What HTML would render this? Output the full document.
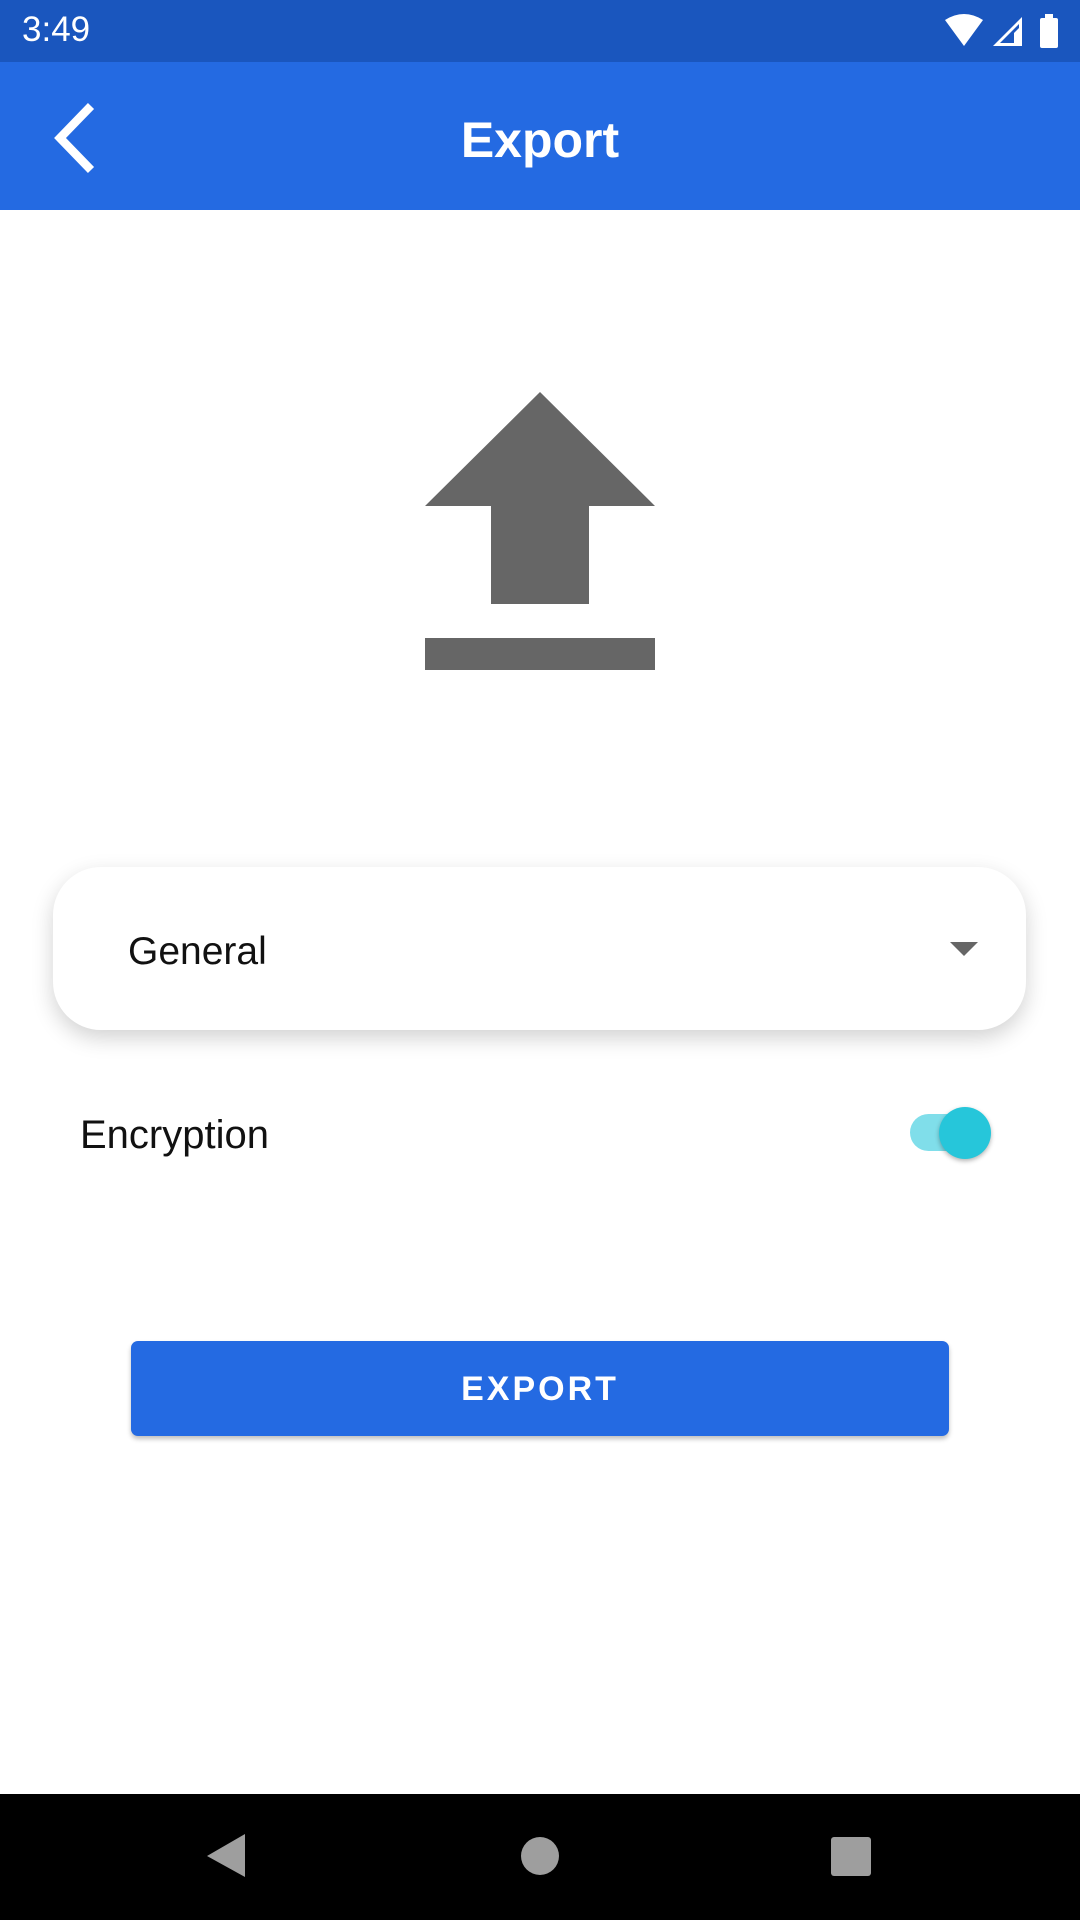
<!DOCTYPE html>
<html><head><meta charset="utf-8"><style>
body{margin:0;width:1080px;height:1920px;position:relative;background:#fff;font-family:"Liberation Sans",Roboto,sans-serif;overflow:hidden}
.abs{position:absolute}
</style></head><body>
<div class="abs" style="left:0;top:0;width:1080px;height:62px;background:#1a56be"></div>
<div class="abs" style="left:22px;top:10px;color:#fff;font-size:35px">3:49</div>
<svg class="abs" style="left:940px;top:12px" width="130" height="40" viewBox="0 0 130 40">
<path d="M5 8 Q24 -4 43 8 L24 34 Z" fill="#fff"/>
<path d="M53 34 L82 5 L82 34 Z" fill="#fff"/><path d="M60 31 L79 12 L79 31 Z" fill="#1a56be"/><path d="M74 31 L79 31 L79 16 L74 21Z" fill="#fff"/>
<rect x="100" y="6" width="18" height="30" rx="2" fill="#fff"/><rect x="105" y="2" width="8" height="5" fill="#fff"/>
</svg>
<div class="abs" style="left:0;top:62px;width:1080px;height:148px;background:#246ae2"></div>
<svg class="abs" style="left:48px;top:100px" width="60" height="76" viewBox="0 0 60 76"><path d="M43 6 L12 38 L43 70" stroke="#fff" stroke-width="8.5" fill="none"/></svg>
<div class="abs" style="left:0;width:1080px;top:111px;text-align:center;color:#fff;font-size:50px;font-weight:bold">Export</div>
<svg class="abs" style="left:0;top:0" width="1080" height="700">
<path d="M540 392 L655 506 L589 506 L589 604 L491 604 L491 506 L425 506 Z" fill="#666"/>
<rect x="425" y="638" width="230" height="32" fill="#666"/>
</svg>
<div class="abs" style="left:53px;top:867px;width:973px;height:163px;border-radius:48px;background:#fff;box-shadow:0 8px 22px rgba(0,0,0,0.18)"></div>
<div class="abs" style="left:128px;top:930px;font-size:39px;color:#111">General</div>
<svg class="abs" style="left:950px;top:942px" width="28" height="15"><path d="M0 0 L28 0 L14 14Z" fill="#666"/></svg>
<div class="abs" style="left:80px;top:1113px;font-size:40px;color:#111">Encryption</div>
<div class="abs" style="left:910px;top:1114px;width:70px;height:37px;border-radius:19px;background:#80deea"></div>
<div class="abs" style="left:939px;top:1107px;width:52px;height:52px;border-radius:50%;background:#26c6da;box-shadow:0 2px 5px rgba(0,0,0,0.3)"></div>
<div class="abs" style="left:131px;top:1341px;width:818px;height:95px;border-radius:7px;background:#246ae2;box-shadow:0 3px 5px rgba(0,0,0,0.25);color:#fff;font-size:34px;font-weight:bold;letter-spacing:3px;text-align:center;line-height:97px">EXPORT</div>
<div class="abs" style="left:0;top:1794px;width:1080px;height:126px;background:#000"></div>
<svg class="abs" style="left:0;top:1794px" width="1080" height="126">
<path d="M245 40 L245 83 L207 62 Z" fill="#9e9e9e"/>
<circle cx="540" cy="62" r="19" fill="#9e9e9e"/>
<rect x="831" y="43" width="40" height="39" rx="3" fill="#9e9e9e"/>
</svg>
</body></html>
